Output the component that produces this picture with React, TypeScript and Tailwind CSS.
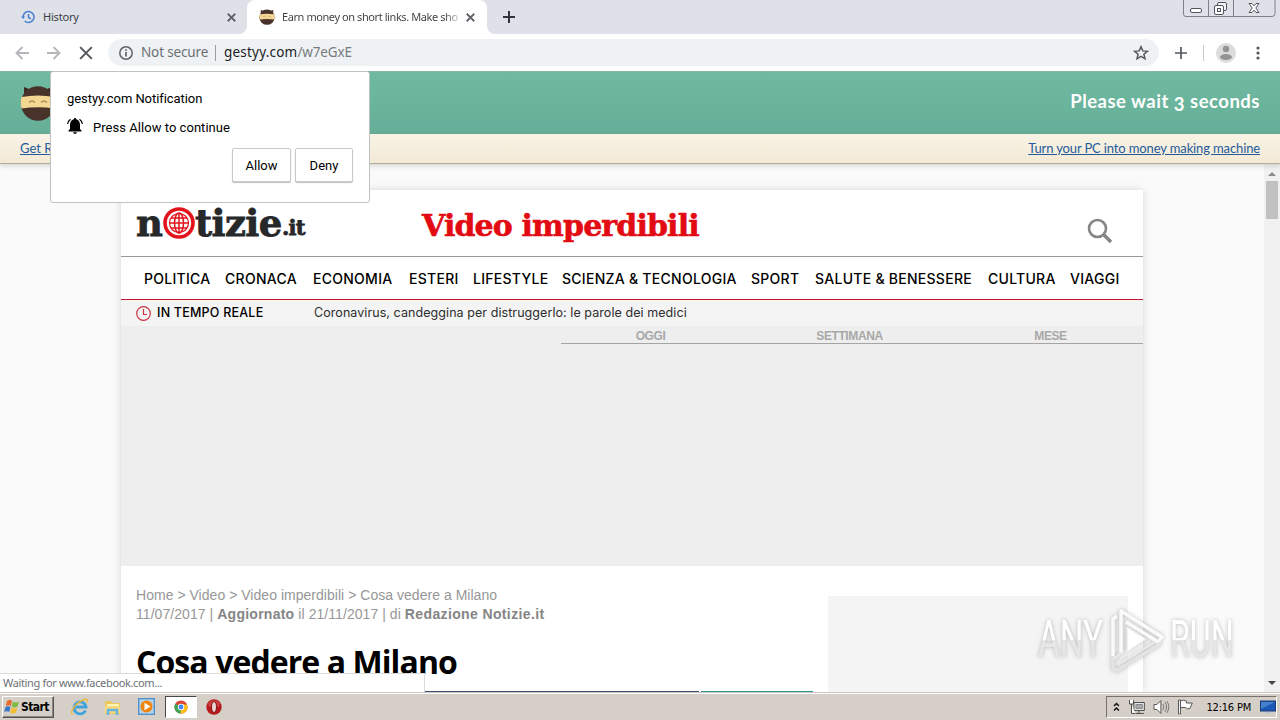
import type { ReactNode } from "react";

const navItems = [
  { label: "POLITICA", width: "w-[66px]" },
  { label: "CRONACA", width: "w-[73px]" },
  { label: "ECONOMIA", width: "w-[81px]" },
  { label: "ESTERI", width: "w-[49px]" },
  { label: "LIFESTYLE", width: "w-[74px]" },
  { label: "SCIENZA & TECNOLOGIA", width: "w-[174px]" },
  { label: "SPORT", width: "w-[49px]" },
  { label: "SALUTE & BENESSERE", width: "w-[158px]" },
  { label: "CULTURA", width: "w-[67px]" },
  { label: "VIAGGI", width: "w-[50px]" },
];

function Ninja({ size }: { size: number }) {
  return (
    <svg width={size} height={size} viewBox="0 0 36 36" className="shrink-0">
      <path d="M4 8V2l5 2h18l5-2v6z" fill="#3c2a22" />
      <circle cx="18" cy="18.500" r="17.200" fill="#49322a" />
      <path d="M1.500 12Q18 9 34.500 12Q36.500 18 34.500 23.500Q18 21 1.500 23.500Q0 18 1.500 12z" fill="#f3d793" />
      <path d="M9 17.500q3-3 6 0M21 17.500q3-3 6 0" stroke="#a98b58" strokeWidth="1.200" fill="none" />
    </svg>
  );
}

function Cross({ size, color, weight }: { size: number; color: string; weight: number }) {
  return (
    <svg width={size} height={size} viewBox="0 0 12 12" stroke={color} strokeWidth={weight} className="shrink-0">
      <path d="M1 1l10 10M11 1L1 11" />
    </svg>
  );
}

function TabStrip() {
  return (
    <div className="relative flex h-[34px] bg-[#dee1e8] font-['Noto_Sans',sans-serif] text-[11px] tracking-[-0.42px] text-[#3c4043]">
      <div className="flex w-[247px] items-center pl-[21px]">
        <svg width="14" height="14" viewBox="0 0 14 14" fill="none" stroke="#4a7fd0" strokeWidth="1.500">
          <path d="M2 7a5.500 5.500 0 1 1 1.700 4M7.500 4v3.500l2.500 1.300" />
          <path d="M0 6.500h4.200L2.100 9z" fill="#4a7fd0" stroke="none" />
        </svg>
        <span className="ml-2 w-[184px] tracking-[-0.2px]">History</span>
        <Cross size={9} color="#5f6368" weight={2.4} />
      </div>
      <div className="relative flex w-[240px] items-center rounded-t-lg bg-white pl-[12px]">
        <svg width="8" height="8" className="absolute bottom-0 -left-2" fill="#fff"><path d="M8 0v8H0a8 8 0 0 0 8-8" /></svg>
        <svg width="8" height="8" className="absolute -right-2 bottom-0" fill="#fff"><path d="M0 0v8h8a8 8 0 0 1-8-8" /></svg>
        <Ninja size={16} />
        <span className="ml-[7px] w-[176px] bg-linear-to-r from-[#3c4043] from-92% to-[#c4c4c4] bg-clip-text whitespace-nowrap text-transparent">
          Earn money on short links. Make sho
        </span>
        <span className="ml-[8px] flex"><Cross size={9} color="#5f6368" weight={2.4} /></span>
      </div>
      <svg width="12" height="12" viewBox="0 0 12 12" stroke="#30343a" strokeWidth="2" className="mt-[11px] ml-[16px]"><path d="M6 0v12M0 6h12" /></svg>
      <svg width="94" height="18" viewBox="0 0 94 18" fill="none" stroke="#7c8088" className="absolute top-0 left-[1183px]">
        <path d="M.5 0v14q0 2.500 2.500 2.500h86q3 0 3-3V0M25.500 0v16M50.500 0v16" />
        <rect x="7.500" y="8.500" width="11" height="4" rx="1.500" stroke="#50545c" fill="#fff" />
        <rect x="34.500" y="2.500" width="9" height="8" rx="1.500" stroke="#50545c" fill="#f5f5f7" />
        <rect x="31.500" y="5.500" width="9" height="9" rx="1.500" stroke="#50545c" fill="#fff" />
        <rect x="34.500" y="8.500" width="3" height="3" stroke="#50545c" />
        <path d="M66 3.500h3l2 2.300 2-2.300h3l-3.200 4.500 3.200 4.500h-3l-2-2.300-2 2.300h-3l3.200-4.500z" stroke="#50545c" fill="#fff" />
      </svg>
    </div>
  );
}

function Toolbar() {
  return (
    <div className="flex h-[37px] items-center bg-white pl-[15px]">
      <svg width="14" height="14" viewBox="0 0 14 14" fill="none" stroke="#b4b6b9" strokeWidth="1.800"><path d="M14 7H1.500M7.500 1l-6 6 6 6" /></svg>
      <svg width="14" height="14" viewBox="0 0 14 14" fill="none" stroke="#b4b6b9" strokeWidth="1.800" className="ml-[18px]"><path d="M0 7h12.500M6.500 1l6 6-6 6" /></svg>
      <span className="ml-[18px] flex"><Cross size={14} color="#54585c" weight={1.7} /></span>
      <div className="ml-[15px] flex h-[27px] w-[1051px] items-center rounded-full bg-[#eff2f5] pl-[11px] font-['Noto_Sans',sans-serif] text-[13.5px] text-[#6b6f74]">
        <svg width="14" height="14" viewBox="0 0 14 14" fill="none" stroke="#5f6368" strokeWidth="1.500"><circle cx="7" cy="7" r="6.200" /><path d="M7 6v4.500M7 3.200v1.500" strokeWidth="1.700" /></svg>
        <span className="ml-[8px] w-[67px] tracking-[-0.15px] whitespace-nowrap">Not secure</span>
        <span className="ml-[7px] h-[16px] w-px bg-[#9a9da1]" />
        <span className="ml-[8px] w-[890px] tracking-[0.2px] whitespace-nowrap text-[#202124]">gestyy.com<span className="tracking-[-0.15px] text-[#777b80]">/w7eGxE</span></span>
        <svg width="16" height="16" viewBox="0 0 16 16" fill="none" stroke="#54585c" strokeWidth="1.500" className="ml-[19px]"><path d="M8 1.700l1.800 4.200 4.600.4-3.500 3 1.100 4.500L8 11.400l-4 2.400 1.100-4.500-3.500-3 4.600-.4z" /></svg>
      </div>
      <svg width="12" height="12" viewBox="0 0 12 12" stroke="#54585c" strokeWidth="1.700" className="ml-[16px]"><path d="M6 0v12M0 6h12" /></svg>
      <span className="ml-[16px] h-[16px] w-px bg-[#c5c8cc]" />
      <svg width="20" height="20" viewBox="0 0 20 20" className="ml-[12px]"><circle cx="10" cy="10" r="10" fill="#dcdcdd" /><circle cx="10" cy="6" r="3.200" fill="#929395" /><ellipse cx="10" cy="14" rx="6" ry="3" fill="#929395" /></svg>
      <svg width="4" height="14" viewBox="0 0 4 14" fill="#54585c" className="ml-[20px]"><circle cx="2" cy="2" r="1.600" /><circle cx="2" cy="7" r="1.600" /><circle cx="2" cy="12" r="1.600" /></svg>
    </div>
  );
}

function Banner() {
  return (
    <>
      <div className="flex h-[63px] items-center justify-between border-t border-[#86b5a4] bg-linear-to-b from-[#70baa2] to-[#66ae97] px-5">
        <Ninja size={36} />
        <span className="pb-[2px] font-['Lato',sans-serif] text-[18.5px] font-bold tracking-[0.5px] text-white">Please wait <span className="relative top-[3px]">3</span> seconds</span>
      </div>
      <div className="relative z-10 flex h-[30px] items-center justify-between border-b border-[#b5ad9c] bg-linear-to-b from-[#f8f3e6] to-[#f3ead5] px-5 font-['Lato',sans-serif] text-[13px] text-[#245a9c] underline shadow-[0_2px_5px_rgba(0,0,0,0.15)]">
        <span>Get Rich</span>
        <span className="tracking-[-0.13px]">Turn your PC into money making machine</span>
      </div>
    </>
  );
}

function NewsLogo() {
  return (
    <div className="flex h-[44px] w-[171px] items-center font-['DejaVu_Serif',serif] font-bold text-[#27282a] [-webkit-text-stroke:0.8px_#27282a]">
      <span className="w-[27px] text-[37px] leading-[44px] tracking-[-1px]">n</span>
      <svg width="32" height="32" viewBox="0 0 32 32" fill="none" stroke="#e2131c" className="shrink-0">
        <circle cx="16" cy="16" r="14" strokeWidth="3.600" />
        <ellipse cx="16" cy="16" rx="4.500" ry="10" strokeWidth="1.500" />
        <circle cx="16" cy="16" r="9.500" strokeWidth="1.200" />
        <path d="M16 6v20M6 16h20M8 11h16M8 21h16" strokeWidth="1.500" />
      </svg>
      <span className="w-[87px] text-[37px] leading-[44px] tracking-[-0.6px]">tizie</span>
      <span className="pt-[9px] text-[21px] leading-[30px] tracking-[-0.8px]">.it</span>
    </div>
  );
}

function ArticleCard() {
  return (
    <main className="mt-[26px] ml-[121px] h-[502px] w-[1022px] shrink-0 bg-white shadow-[0_0_8px_rgba(0,0,0,0.15)]">
      <div className="flex h-[67px] items-start border-b border-[#999] pl-[15px]">
        <div className="mt-[11px]"><NewsLogo /></div>
        <h2 className="mt-[15px] ml-[115px] w-[300px] font-['DejaVu_Serif',serif] text-[30px] leading-[42px] font-bold tracking-[-0.85px] whitespace-nowrap text-[#e30b13] [-webkit-text-stroke:0.6px_#e30b13]">Video imperdibili</h2>
        <svg width="26" height="26" viewBox="0 0 26 26" fill="none" stroke="#858585" strokeWidth="2.600" className="mt-[28px] ml-[365px]"><circle cx="10.500" cy="10.500" r="8.500" /><path d="M17 17l7 7" strokeWidth="3.500" /></svg>
      </div>
      <nav className="flex h-[43px] items-center gap-[15px] border-b border-[#c4182a] pl-[23px] font-['Inter',sans-serif] text-[14px] font-medium tracking-[0.27px] text-black">
        {navItems.map((item) => (
          <span key={item.label} className={`${item.width} shrink-0 whitespace-nowrap`}>{item.label}</span>
        ))}
      </nav>
      <div className="flex h-[26px] items-center bg-[#f4f4f4] pl-[15px] font-['Inter',sans-serif] text-[12.5px] text-[#2d2d2d]">
        <svg width="15" height="15" viewBox="0 0 15 15" fill="none" stroke="#c93342" strokeWidth="1.200"><circle cx="7.500" cy="7.500" r="6.800" /><path d="M7.500 3v5.500H11" /></svg>
        <span className="ml-[6px] w-[157px] font-medium tracking-[0.22px] text-black">IN TEMPO REALE</span>
        <span className="tracking-[0.07px]">Coronavirus, candeggina per distruggerlo: le parole dei medici</span>
      </div>
      <div className="h-[240px] bg-[#eee] pl-[440px]">
        <div className="flex h-[18px] border-b border-[#a5a5a5] pt-px font-['Liberation_Sans',sans-serif] text-[12px] leading-[19px] font-bold tracking-[-0.4px] text-[#a8a8a8]">
          <span className="w-[179px] text-center">OGGI</span>
          <span className="w-[219px] text-center">SETTIMANA</span>
          <span className="w-[183px] text-center">MESE</span>
        </div>
      </div>
      <div className="flex justify-between pr-[15px] pl-[15px]">
        <article className="w-[677px] pt-[20px]">
          <p className="font-['Liberation_Sans',sans-serif] text-[14px] leading-[19px] tracking-[0.03px] text-[#979797]">Home &gt; Video &gt; Video imperdibili &gt; Cosa vedere a Milano</p>
          <p className="font-['Liberation_Sans',sans-serif] text-[14px] leading-[19px] tracking-[0.06px] text-[#979797]">11/07/2017 | <b className="tracking-[0.25px] text-[#858585]">Aggiornato</b> il 21/11/2017 | di <b className="tracking-[0.37px] text-[#858585]">Redazione Notizie.it</b></p>
          <h1 className="mt-[16px] font-['Open_Sans',sans-serif] text-[32px] leading-[44px] font-bold tracking-[-0.92px] text-black">Cosa vedere a Milano</h1>
          <div className="mt-[7px] flex h-[2px]">
            <div className="ml-[288px] w-[275px] bg-[#454b70]" />
            <div className="ml-[2px] w-[112px] bg-[#2f9992]" />
          </div>
        </article>
        <aside className="mt-[30px] h-[96px] w-[300px] bg-[#f4f4f4]" />
      </div>
    </main>
  );
}

function ScrollBar() {
  return (
    <div className="ml-auto flex h-[528px] w-[16px] flex-col items-center bg-[#f1f1f1]">
      <svg width="8" height="4" className="mt-[8px]" fill="#8c8c8c"><path d="M0 4l4-4 4 4z" /></svg>
      <div className="mt-[5px] h-[38px] w-[12px] bg-[#c1c1c1]" />
      <svg width="8" height="4" className="mt-auto mb-[7px]" fill="#454545"><path d="M0 0h8L4 4z" /></svg>
    </div>
  );
}

function PopupButton({ children, width }: { children: ReactNode; width: string }) {
  return <button className={`${width} h-[34px] rounded-[2px] border border-[#c9c9c9] bg-white pt-px shadow-[0_1px_1px_rgba(0,0,0,0.25)]`}>{children}</button>;
}

function NotificationPopup() {
  return (
    <div className="absolute top-[71px] left-[50px] z-20 h-[132px] w-[320px] rounded-[3px] border border-[#bfc3c3] bg-white px-4 pt-[17px] font-['Roboto',sans-serif] text-[13px] text-black">
      <p className="leading-[20px] tracking-[-0.06px]">gestyy.com Notification</p>
      <div className="mt-[8px] flex h-[20px] items-center">
        <svg width="16" height="16" viewBox="0 0 16 16" className="-mt-[3px]"><path d="M8 0q1.200 0 1.200 1.300Q13 2.500 13 7v4l1.500 1.500v1H1.500v-1L3 11V7q0-4.500 3.800-5.700Q6.800 0 8 0M6 14.300h4Q9.500 16 8 16t-2-1.700" /><path d="M3.500 1.200Q.8 3 .6 6M12.500 1.200Q15.200 3 15.400 6" fill="none" stroke="#000" strokeWidth="1.200" /></svg>
        <span className="ml-[10px] pt-[2px] tracking-[0.04px]">Press Allow to continue</span>
      </div>
      <div className="mt-[11px] flex justify-end gap-[4px]">
        <PopupButton width="w-[59px]">Allow</PopupButton>
        <PopupButton width="w-[58px]">Deny</PopupButton>
      </div>
    </div>
  );
}

function Watermark() {
  return (
    <div className="absolute top-[607px] left-[1038px] z-10 flex h-[66px] w-[196px] items-center justify-between font-['Roboto',sans-serif] drop-shadow-[0_0_2px_rgba(0,0,0,0.26)]">
      <div className="w-[64px]">
        <span className="block w-max origin-left scale-x-[0.64] bg-linear-to-b from-white from-50% to-[#e6e6e6] to-50% bg-clip-text text-[52px] leading-[68px] text-transparent">ANY</span>
      </div>
      <svg width="56" height="66" viewBox="0 0 56 66" fill="none" stroke="#fafafa" strokeWidth="3.500" strokeLinejoin="round">
        <path d="M5 50V12l4-3" />
        <path d="M13 46V4l41 26-4 5L18 15" />
        <path d="M5 49v13l5 1 43-27" stroke="#e3e3e3" />
        <path d="M13 46l-7 6M13 56l34-21" stroke="#e9e9e9" strokeWidth="2.500" />
        <path d="M19 20v25l19-13z" fill="#fff" stroke="#ececec" strokeWidth="1.500" />
      </svg>
      <div className="w-[64px]">
        <span className="block w-max origin-left scale-x-[0.62] bg-linear-to-b from-white from-50% to-[#e6e6e6] to-50% bg-clip-text text-[52px] leading-[68px] text-transparent">RUN</span>
      </div>
    </div>
  );
}

function Taskbar() {
  return (
    <footer className="flex h-[28px] items-center border-t border-[#c9c6bf] bg-[#d5cfc7] pl-[2px] font-['DejaVu_Sans_Condensed','DejaVu_Sans',sans-serif] shadow-[inset_0_1px_0_#fff]">
      <div className="flex h-[22px] w-[52px] items-center border border-t-white border-r-[#555] border-b-[#555] border-l-white pl-[1px] text-[12px] font-bold tracking-[-0.6px] text-black shadow-[inset_-1px_-1px_0_#8c8880]">
        <svg width="16" height="15" viewBox="0 0 16 15" className="shrink-0">
          <path d="M3 2q3-2 5 0L6.800 7q-2.500-1.500-5 0z" fill="#e86b2b" /><path d="M9 2.500q3 2 6 0L13.500 7.500q-3 2-5.700 0z" fill="#7dbb42" />
          <path d="M1.500 8q2.500-1.500 5 0L5.200 13q-2.500-1.500-5 0z" fill="#3978c9" /><path d="M7.500 8.500q3 2 5.700 0L12 13.500q-3 2-5.700 0z" fill="#f2bf2e" />
        </svg>
        <span className="ml-px">Start</span>
      </div>
      <svg width="18" height="18" viewBox="0 0 18 18" fill="none" className="ml-[17px]">
        <path d="M14.500 12.500A6 6 0 1 1 15 9H4" stroke="#3fa3dd" strokeWidth="2.800" />
        <path d="M2 15.500Q-.5 17 1 12.500 5 4.500 13.500 1.500q4-1 2.500 3" stroke="#e9b940" strokeWidth="1.400" />
      </svg>
      <svg width="17" height="18" viewBox="0 0 17 18" className="ml-[15px]">
        <path d="M1 3h6l1 2h8v11H1z" fill="#ecc75b" /><path d="M3 6h12v8H3z" fill="#fff3b5" /><path d="M1 8h15v7H1z" fill="#f6da7c" />
        <path d="M4 17v-5h9v5" fill="none" stroke="#68b3df" strokeWidth="2.600" />
      </svg>
      <svg width="17" height="17" viewBox="0 0 17 17" className="ml-[17px]"><rect x=".7" y=".7" width="15.600" height="15.600" fill="#b9d4ea" stroke="#4f92cd" strokeWidth="1.400" /><circle cx="8.500" cy="8.500" r="6" fill="#ef850d" /><path d="M6.500 4.800v7.400l6-3.700z" fill="#fff" /></svg>
      <div className="ml-[10px] flex h-[22px] w-[32px] items-center justify-center border border-t-[#484848] border-r-white border-b-white border-l-[#484848] bg-white">
        <svg width="14" height="14" viewBox="0 0 16 16">
          <circle cx="8" cy="8" r="7.500" fill="#db4437" /><path d="M8 8L1.500 4.200A7.500 7.500 0 0 0 7.500 15.500L11.200 9z" fill="#3aa757" /><path d="M8 8l-.5 7.500A7.500 7.500 0 0 0 14.800 5H8z" fill="#fbc116" />
          <circle cx="8" cy="8" r="3.700" fill="#fff" /><circle cx="8" cy="8" r="2.800" fill="#4285f4" />
        </svg>
      </div>
      <svg width="16" height="16" viewBox="0 0 16 16" className="ml-[9px]"><circle cx="8" cy="8" r="7.700" fill="#b51a1c" /><path d="M2 4Q8-2 14 4l-1 4H3z" fill="#d95a55" opacity=".6" /><ellipse cx="8" cy="8" rx="2.500" ry="5.500" fill="#e9d7d2" stroke="#851014" /></svg>
      <div className="mr-[3px] ml-auto flex h-[22px] w-[171px] items-center border border-t-[#77736c] border-r-white border-b-white border-l-[#77736c] pl-[6px] text-black">
        <svg width="7" height="10" viewBox="0 0 7 10" fill="none" stroke="#111" strokeWidth="1.500"><path d="M1 4l2.500-2.500L6 4M1 8.500L3.500 6 6 8.500" /></svg>
        <svg width="16" height="16" viewBox="0 0 16 16" fill="none" stroke="#4a4a4a" className="ml-[9px]"><path d="M5 3.500h10.500v8H5zM7 14.500h8M10 11.500v3" fill="#eee" /><path d="M7 5.500h6.500v4H7z" fill="#aaa" stroke="#888" /><path d="M.5 1v4h4V1M2.500 5v9.500h4" fill="#fff" /></svg>
        <svg width="17" height="16" viewBox="0 0 17 16" fill="none" stroke="#777" className="ml-[8px]"><path d="M1 5.500h3l4-4v13l-4-4H1z" fill="#fff" stroke="#555" /><path d="M10 5q2 3 0 6M12 3q3.500 5 0 10M14 2q4 6 0 12" /></svg>
        <svg width="17" height="16" viewBox="0 0 17 16" fill="#fff" stroke="#555" className="ml-[7px]"><path d="M1.500 1h2v14h-2zM3.500 2q3-2 6 0v2h6l-2.500 5.500q-3 1-4.500-1H3.500z" /></svg>
        <span className="ml-[13px] w-[46px] pt-[3px] text-[11px] tracking-[-0.2px] whitespace-nowrap">12:16 PM</span>
        <svg width="16" height="14" viewBox="0 0 16 14" className="ml-[8px] shrink-0"><rect x=".5" y="1" width="15" height="10" fill="#1b58b5" stroke="#163a72" /><path d="M1 2h14L1 9z" fill="#5f9be0" opacity=".6" /><path d="M5 12h6v1.500H5z" fill="#b9c5d1" /></svg>
      </div>
    </footer>
  );
}

export default function App() {
  return (
    <div className="relative flex h-[720px] w-[1280px] flex-col overflow-hidden bg-[#fafafa]">
      <TabStrip />
      <Toolbar />
      <Banner />
      <div className="flex h-[528px] items-start overflow-hidden">
        <ArticleCard />
        <ScrollBar />
      </div>
      <Taskbar />
      <NotificationPopup />
      <Watermark />
      <div className="absolute top-[673px] left-0 h-[19px] w-[425px] border-t border-r border-[#dadada] bg-white pl-[3px] font-['Noto_Sans',sans-serif] text-[11px] leading-[17px] tracking-[-0.35px] text-[#6d7074]">Waiting for www.facebook.com...</div>
    </div>
  );
}
